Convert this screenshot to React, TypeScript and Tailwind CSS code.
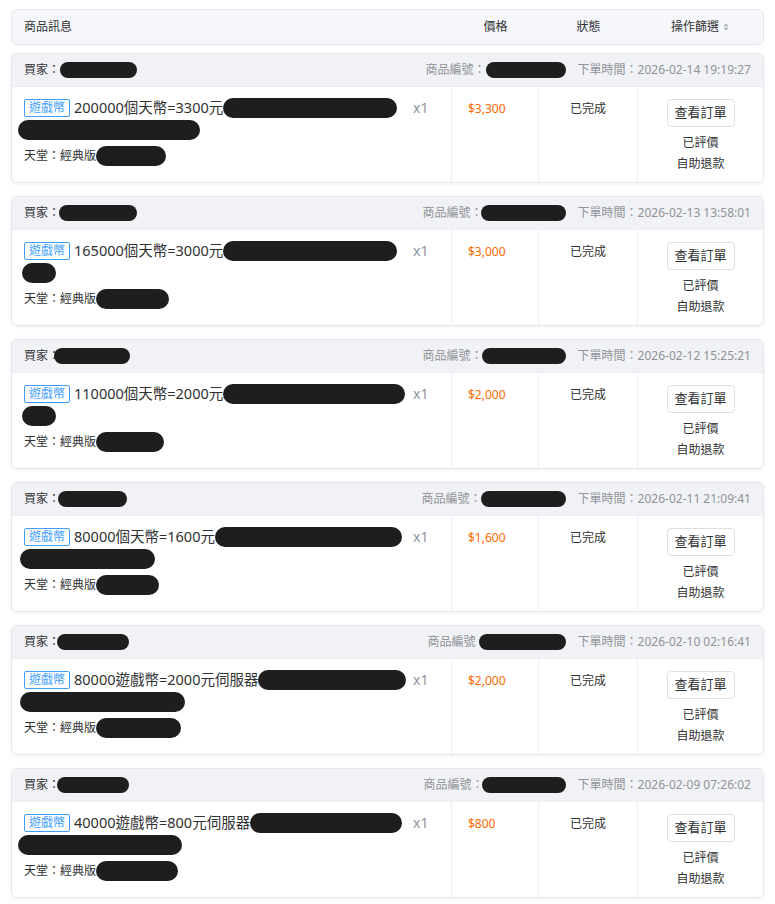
import React from "react";

type Order = {
  buyer: number[]; // [marginLeft, width]
  prod: number[];
  time: string;
  title: string;
  blob1: number;
  blob2: number[]; // [marginLeft, width]
  blob3: number;
  price: string;
};

const orders: Order[] = [
  { buyer: [0, 77], prod: [2, 80], time: "2026-02-14 19:19:27", title: "200000個天幣=3300元", blob1: 174, blob2: [-6, 182], blob3: 70, price: "$3,300" },
  { buyer: [-1, 78], prod: [0, 85], time: "2026-02-13 13:58:01", title: "165000個天幣=3000元", blob1: 174, blob2: [-2, 34], blob3: 73, price: "$3,000" },
  { buyer: [-6, 76], prod: [1, 84], time: "2026-02-12 15:25:21", title: "110000個天幣=2000元", blob1: 182, blob2: [-2, 34], blob3: 68, price: "$2,000" },
  { buyer: [-2, 69], prod: [1, 85], time: "2026-02-11 21:09:41", title: "80000個天幣=1600元", blob1: 187, blob2: [-4, 135], blob3: 63, price: "$1,600" },
  { buyer: [-3, 72], prod: [-7, 87], time: "2026-02-10 02:16:41", title: "80000遊戲幣=2000元伺服器 ", blob1: 148, blob2: [-4, 165], blob3: 85, price: "$2,000" },
  { buyer: [-3, 72], prod: [0, 84], time: "2026-02-09 07:26:02", title: "40000遊戲幣=800元伺服器", blob1: 152, blob2: [-6, 164], blob3: 82, price: "$800" },
];

function Blob({ w, h = 18, ml = 0 }: { w: number; h?: number; ml?: number }) {
  return (
    <span
      className="inline-block shrink-0 rounded-full bg-[#1e1e1e] align-middle"
      style={{ width: w, height: h, marginLeft: ml }}
    />
  );
}

function Card({ o }: { o: Order }) {
  return (
    <div className="rounded-[6px] border border-[#e4e7ed] bg-white shadow-[0_1px_4px_rgba(0,0,0,0.06)] overflow-hidden">
      <div className="flex h-[32px] items-center bg-[#f0f2f5] px-[12px] text-[12px]">
        <span className="text-[#303133]">買家：</span>
        <Blob w={o.buyer[1]} h={16} ml={o.buyer[0]} />
        <span className="ml-auto text-[#909399]">商品編號：</span>
        <Blob w={o.prod[1]} h={16} ml={o.prod[0] - 2} />
        <span className="ml-[12px] text-[#909399]">下單時間：{o.time}</span>
      </div>
      <div className="grid grid-cols-[439px_87px_99px_1fr] border-t border-[#ebeef5]">
        <div className="flex px-[12px] pt-[12px] pb-[16px]">
          <div className="flex-1">
            <div className="flex items-center h-[18px] whitespace-nowrap">
              <span className="inline-flex h-[18px] items-center rounded-[2px] border border-[#409eff] px-[4px] text-[12px] text-[#409eff] leading-none">
                遊戲幣
              </span>
              <span className="ml-[4px] text-[14.5px] text-[#303133]">{o.title}</span>
              <Blob w={o.blob1} h={20} />
            </div>
            <div className="mt-[3px] h-[20px] flex items-center">
              <Blob w={o.blob2[1]} h={20} ml={o.blob2[0]} />
            </div>
            <div className="mt-[6px] flex items-center h-[20px] text-[12px] text-[#303133]">
              <span>天堂：經典版</span>
              <Blob w={o.blob3} h={20} />
            </div>
          </div>
          <div className="w-[28px] text-[14px] text-[#909399] leading-[18px] pl-[2px]">x1</div>
        </div>
        <div className="border-l border-[#ebeef5] pl-[16px] pt-[13px] text-[12px] text-[#ff6a00]">
          {o.price}
        </div>
        <div className="border-l border-[#ebeef5] pt-[13px] text-center text-[12px] text-[#303133]">
          已完成
        </div>
        <div className="border-l border-[#ebeef5] flex flex-col items-center pt-[12px] text-[12px] text-[#303133]">
          <button className="h-[28px] w-[68px] rounded-[4px] border border-[#dcdfe6] bg-white text-[13px] text-[#303133]">
            查看訂單
          </button>
          <div className="mt-[5px] leading-[21px]">已評價</div>
          <div className="leading-[21px]">自助退款</div>
        </div>
      </div>
    </div>
  );
}

export default function App() {
  return (
    <div
      className="min-h-[904px] w-[775px] bg-white px-[11px] pt-[9px]"
      style={{ fontFamily: '"Noto Sans", "Noto Sans CJK TC", sans-serif' }}
    >
      <div className="grid h-[36px] grid-cols-[440px_87px_99px_1fr] items-center rounded-[6px] border border-[#e4e7ed] bg-[#f5f7fa] text-[12px] text-[#303133]">
        <div className="pl-[12px]">商品訊息</div>
        <div className="text-center">價格</div>
        <div className="text-center">狀態</div>
        <div className="flex items-center justify-center">
          操作篩選
          <svg width="8" height="10" viewBox="0 0 8 10" className="ml-[3px]">
            <path d="M4 1.5 L6.5 4.3 H1.5 Z" fill="#a8abb2" />
            <path d="M4 8.5 L6.5 5.7 H1.5 Z" fill="#a8abb2" />
          </svg>
        </div>
      </div>
      <div className="mt-[8px] flex flex-col gap-[13px]">
        {orders.map((o, i) => (
          <Card key={i} o={o} />
        ))}
      </div>
    </div>
  );
}
